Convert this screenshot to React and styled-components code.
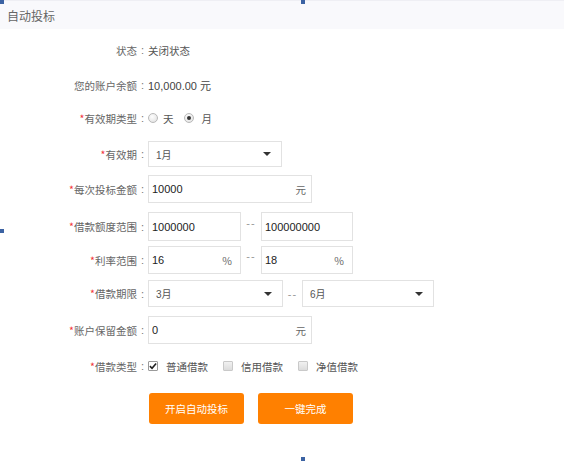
import React from 'react';
import styled, { createGlobalStyle } from 'styled-components';

const GlobalStyle = createGlobalStyle`
  html, body {
    margin: 0;
    padding: 0;
    background: #fff;
  }
  body {
    font-family: "Liberation Sans", "Noto Sans CJK SC", sans-serif;
  }
`;

const periods = ['1月', '3月', '6月'];

const App = () => {
  return (
    <>
      <GlobalStyle />
      <Page>
        <Header>
          <Title>自动投标</Title>
        </Header>
        <Form>
          <Row $mt={7}>
            <Label>状态</Label>
            <Value>关闭状态</Value>
          </Row>
          <Row $mt={7}>
            <Label>您的账户余额</Label>
            <Value $dark>10,000.00 元</Value>
          </Row>
          <Row $mt={5}>
            <Label required>有效期类型</Label>
            <Choice>
              <Radio />
              <span>天</span>
            </Choice>
            <Choice>
              <Radio checked />
              <span>月</span>
            </Choice>
          </Row>
          <Row $mt={9} $h={26}>
            <Label required>有效期</Label>
            <Select $w={134}>
              <span>{periods[0]}</span>
              <Caret />
            </Select>
          </Row>
          <Row $mt={8}>
            <Label required>每次投标金额</Label>
            <Field $w={164}>
              <Input defaultValue="10000" />
              <Unit>元</Unit>
            </Field>
          </Row>
          <Row $mt={9} $h={29}>
            <Label required>借款额度范围</Label>
            <Field $w={93}>
              <Input defaultValue="1000000" />
            </Field>
            <Sep $w={20} $raise={4}>--</Sep>
            <Field $w={92}>
              <Input defaultValue="100000000" />
            </Field>
          </Row>
          <Row $mt={5}>
            <Label required>利率范围</Label>
            <Field $w={93}>
              <Input defaultValue="16" />
              <Unit $pr={8}>%</Unit>
            </Field>
            <Sep $w={20} $raise={4}>--</Sep>
            <Field $w={92}>
              <Input defaultValue="18" />
              <Unit $pr={8}>%</Unit>
            </Field>
          </Row>
          <Row $mt={6} $h={27}>
            <Label required>借款期限</Label>
            <Select $w={135}>
              <span>{periods[1]}</span>
              <Caret />
            </Select>
            <Sep $w={19} $raise={0}>--</Sep>
            <Select $w={132}>
              <span>{periods[2]}</span>
              <Caret />
            </Select>
          </Row>
          <Row $mt={9}>
            <Label required>账户保留金额</Label>
            <Field $w={164}>
              <Input defaultValue="0" />
              <Unit>元</Unit>
            </Field>
          </Row>
          <Row $mt={8}>
            <Label required>借款类型</Label>
            <Option>
              <Check checked>
                <svg width="9" height="8" viewBox="0 0 9 8">
                  <path d="M1 4.2 L3.4 6.6 L8 1.2" fill="none" stroke="#222" strokeWidth="1.8" />
                </svg>
              </Check>
              <span>普通借款</span>
            </Option>
            <Option>
              <Check />
              <span>信用借款</span>
            </Option>
            <Option>
              <Check />
              <span>净值借款</span>
            </Option>
          </Row>
          <Actions>
            <Button>开启自动投标</Button>
            <Button>一键完成</Button>
          </Actions>
        </Form>
        <Handle $x={0} $y={0} />
        <Handle $x={301} $y={0} />
        <Handle $x={0} $y={229} />
        <Handle $x={301} $y={457} />
      </Page>
    </>
  );
};

const Page = styled.div`
  position: relative;
  width: 564px;
  height: 461px;
  overflow: hidden;
  background: #fff;
`;

const Header = styled.div`
  display: flex;
  align-items: center;
  height: 29px;
  padding-left: 7px;
  background: #f9f9fc;
  border-top: 1px solid #efeff4;
  box-sizing: border-box;
`;

const Title = styled.h1`
  margin: 0;
  font-family: "Noto Sans CJK SC", sans-serif;
  font-size: 12px;
  font-weight: 400;
  color: #666;
`;

const Form = styled.div`
  display: flex;
  flex-direction: column;
`;

const Row = styled.div`
  display: flex;
  align-items: center;
  height: ${({ $h }) => $h || 28}px;
  margin-top: ${({ $mt }) => $mt || 0}px;
  font-size: 10.5px;
`;

const LabelText = styled.div`
  flex: none;
  display: flex;
  justify-content: flex-end;
  align-items: center;
  width: 148px;
  font-family: "Noto Sans CJK SC", sans-serif;
  font-size: 10.5px;
  color: #666;
  white-space: nowrap;

  & > em {
    font-style: normal;
    color: #f2343a;
  }
`;

const Colon = styled.span`
  width: 11px;
  text-align: center;
  font-family: "Liberation Sans", sans-serif;
  font-size: 11px;
  color: #777;
`;

const Label = ({ required, children }) => (
  <LabelText>
    {required && <em>*</em>}
    {children}
    <Colon>:</Colon>
  </LabelText>
);

const Value = styled.div`
  font-family: "Liberation Sans", "Noto Sans CJK SC", sans-serif;
  font-size: ${({ $dark }) => ($dark ? '11px' : '10.5px')};
  color: ${({ $dark }) => ($dark ? '#444' : '#555')};
`;

const Choice = styled.label`
  display: flex;
  align-items: center;
  gap: 5px;
  margin-right: 10px;
  font-family: "Noto Sans CJK SC", sans-serif;
  font-size: 10.5px;
  color: #555;

  &:nth-of-type(2) {
    gap: 8px;
  }
`;

const Radio = styled.span`
  position: relative;
  width: 10px;
  height: 10px;
  box-sizing: border-box;
  border-radius: 50%;
  border: 1px solid #b9b9b9;
  background: radial-gradient(circle at 40% 35%, #fdfdfd 0%, #dedede 100%);

  &::after {
    content: '';
    display: ${({ checked }) => (checked ? 'block' : 'none')};
    position: absolute;
    left: 2px;
    top: 2px;
    width: 4px;
    height: 4px;
    border-radius: 50%;
    background: #333;
  }
`;

const Box = styled.div`
  display: flex;
  align-items: center;
  width: ${({ $w }) => $w}px;
  height: 100%;
  box-sizing: border-box;
  border: 1px solid #e2e2e2;
  background: #fff;
`;

const Field = styled(Box)`
  padding: 0 0 0 3px;
`;

const Input = styled.input`
  flex: 1;
  min-width: 0;
  border: 0;
  outline: 0;
  padding: 0;
  background: transparent;
  font-family: "Liberation Sans", sans-serif;
  font-size: 11px;
  color: #222;
`;

const Unit = styled.span`
  padding-right: ${({ $pr }) => $pr || 5}px;
  font-family: "Noto Sans CJK SC", sans-serif;
  font-size: 10.5px;
  color: #666;
`;

const Select = styled(Box)`
  justify-content: space-between;
  padding: 0 10px 0 7px;
  font-family: "Liberation Sans", "Noto Sans CJK SC", sans-serif;
  font-size: 10px;
  color: #555;
`;

const Caret = styled.i`
  width: 0;
  height: 0;
  border-left: 4px solid transparent;
  border-right: 4px solid transparent;
  border-top: 4px solid #333;
`;

const Sep = styled.span`
  flex: none;
  width: ${({ $w }) => $w}px;
  text-align: center;
  font-family: "Liberation Sans", sans-serif;
  font-size: 11px;
  letter-spacing: 1px;
  color: #999;
  transform: translateY(-${({ $raise }) => $raise}px);
`;

const Option = styled.label`
  display: flex;
  align-items: center;
  gap: 8px;
  margin-right: 15px;
  font-family: "Noto Sans CJK SC", sans-serif;
  font-size: 10.5px;
  color: #555;
`;

const Check = styled.span`
  display: flex;
  align-items: center;
  justify-content: center;
  width: 10px;
  height: 10px;
  box-sizing: border-box;
  border-radius: 1px;
  border: 1px solid ${({ checked }) => (checked ? '#9a9a9a' : '#c9c9c9')};
  background: ${({ checked }) =>
    checked ? '#fff' : 'linear-gradient(#f1f1f1, #dcdcdc)'};
`;

const Actions = styled.div`
  display: flex;
  gap: 14px;
  margin-top: 13px;
  padding-left: 149px;
`;

const Button = styled.button`
  width: 95px;
  height: 31px;
  border: 0;
  border-radius: 3px;
  background: #ff8000;
  color: #fff;
  font-family: "Noto Sans CJK SC", sans-serif;
  font-size: 10.5px;
  cursor: pointer;
`;

const Handle = styled.span`
  position: absolute;
  left: ${({ $x }) => $x}px;
  top: ${({ $y }) => $y}px;
  width: 4px;
  height: 4px;
  background: #3c63a3;
`;

export default App;
